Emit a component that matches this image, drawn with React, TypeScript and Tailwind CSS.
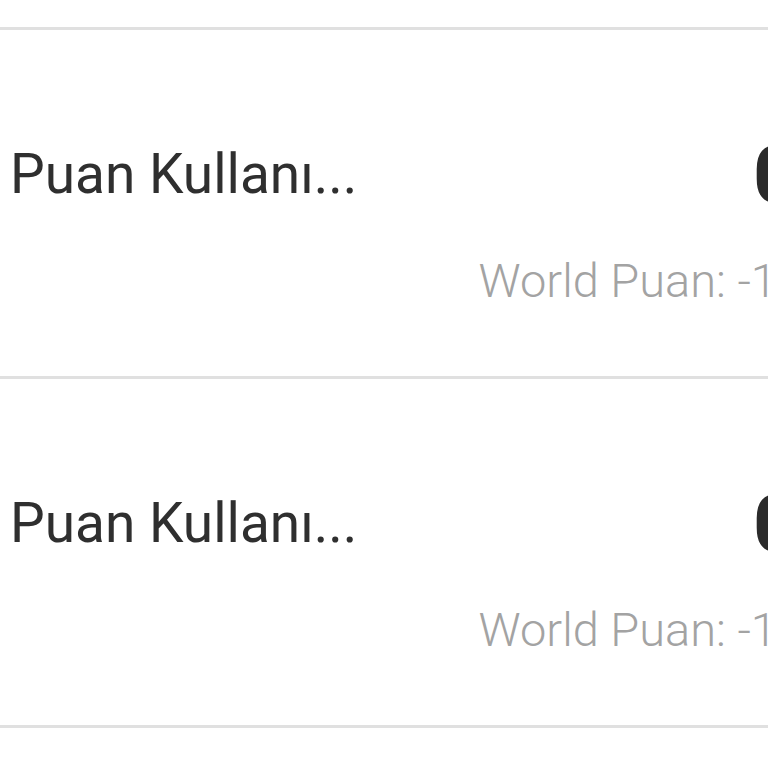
import React from 'react'

const entries = [
    { title: "Puan Kullanı...", amount: "0", world: "World Puan: -10" },
    { title: "Puan Kullanı...", amount: "0", world: "World Puan: -10" },
]

function App() {
    return (
        <div className="w-[768px] h-[768px] overflow-hidden bg-white" style={{ fontFamily: 'Roboto, "Noto Sans", sans-serif' }}>
            <div className="h-[27px]" />
            <div className="w-[803px]">
                {entries.map((entry, index) => (
                    <div key={index} className="h-[349px] border-t-[3px] border-[#e0e0e0] flex justify-between items-start">
                        <div className="pl-[10px] pt-[117px] text-[55px] leading-none text-[#2f2f2f] whitespace-nowrap">
                            {entry.title}
                        </div>
                        <div className="flex flex-col items-end pt-[105px]">
                            <div className="text-[80px] leading-none font-bold text-[#2b2b2b] pr-[4px]">{entry.amount}</div>
                            <div className="mt-[42px] text-[47px] leading-none font-light text-[#a3a3a3] whitespace-nowrap">
                                {entry.world}
                            </div>
                        </div>
                    </div>
                ))}
                <div className="h-[43px] border-t-[3px] border-[#e0e0e0]" />
            </div>
        </div>
    )
}

export default App
